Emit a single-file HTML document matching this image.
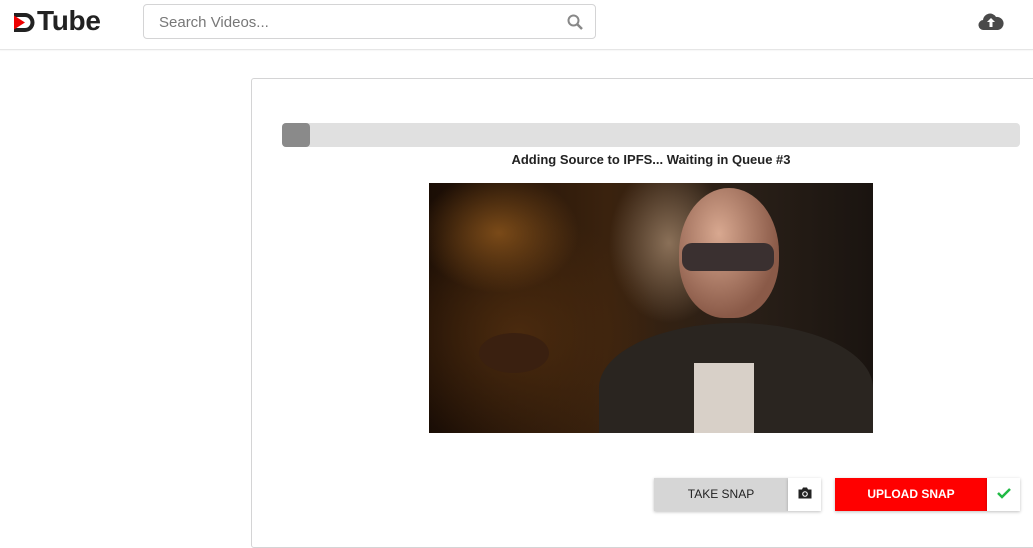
<!DOCTYPE html>
<html><head><meta charset="utf-8"><style>
*{margin:0;padding:0;box-sizing:border-box}
body{width:1033px;height:531px;background:#fff;font-family:"Liberation Sans",Roboto,sans-serif;position:relative;overflow:hidden}
.hdr{position:absolute;left:0;top:0;width:1033px;height:50px;border-bottom:1px solid #e6e6e6;box-shadow:0 1px 1px rgba(0,0,0,.04);background:#fff}
.logo{position:absolute;left:37px;top:5px;font-size:28px;line-height:32px;font-weight:bold;color:#222;letter-spacing:-0.3px}
.search{position:absolute;left:143px;top:4px;width:453px;height:35px;border:1px solid #d4d4d5;border-radius:4px}
.search span{position:absolute;left:15px;top:9px;font-size:15px;color:#777}
.card{position:absolute;left:251px;top:78px;width:790px;height:470px;border:1px solid #d4d4d5;border-radius:3px}
.bar{position:absolute;left:282px;top:123px;width:738px;height:24px;background:#e0e0e0;border-radius:4px}
.bar i{position:absolute;left:0;top:0;width:28px;height:24px;background:#8a8a8a;border-radius:4px}
.msg{position:absolute;left:282px;width:738px;top:152px;text-align:center;font-size:13px;font-weight:bold;color:#222}
.vid{position:absolute;left:429px;top:183px;width:444px;height:250px;overflow:hidden;
background:radial-gradient(ellipse 80px 60px at 70px 50px,#7a4a18,transparent),radial-gradient(ellipse 140px 120px at 90px 150px,#4a2a0e,transparent),radial-gradient(ellipse 60px 80px at 240px 60px,#8a7058,transparent),linear-gradient(90deg,#1a0d05,#3a220e 40%,#2a2018 70%,#1a1410)}
.btn{position:absolute;top:478px;height:33px;box-shadow:0 1px 3px rgba(0,0,0,.25);font-size:12px;text-align:center;line-height:33px}
</style></head><body>
<div class="hdr">
<svg style="position:absolute;left:14px;top:13px" width="21" height="19" viewBox="0 0 21 19"><path d="M0 0h11a9.5 9.5 0 0 1 0 19H0v-4h11a5.5 5.5 0 0 0 0-11H0z" fill="#222"/><path d="M0 2.5l11 7-11 7z" fill="#e00"/></svg>
<div class="logo">Tube</div>
<div class="search"><span>Search Videos...</span>
<svg style="position:absolute;right:12px;top:9px" width="16" height="16" viewBox="0 0 16 16"><circle cx="6.5" cy="6.5" r="5" fill="none" stroke="#888" stroke-width="2"/><path d="M10 10l5 5" stroke="#888" stroke-width="2.5"/></svg></div>
<svg style="position:absolute;left:978px;top:11px" width="26" height="20" viewBox="0 0 26 20"><path d="M6 19a5 5 0 0 1-1-10 7 7 0 0 1 13-3 6 6 0 0 1 2 13z" fill="#4a4a4a"/><path d="M13 7l-4 4h2.5v5h3v-5H17z" fill="#fff"/></svg>
</div>
<div class="card"></div>
<div class="bar"><i></i></div>
<div class="msg">Adding Source to IPFS... Waiting in Queue #3</div>
<div class="vid">
<div style="position:absolute;left:250px;top:5px;width:100px;height:130px;border-radius:50% 50% 45% 45%;background:radial-gradient(ellipse at 40% 35%,#d8a890,#8a5a48 70%)"></div>
<div style="position:absolute;left:253px;top:60px;width:92px;height:28px;border-radius:10px;background:#3a3030"></div>
<div style="position:absolute;left:170px;top:140px;width:274px;height:130px;border-radius:50% 50% 0 0;background:#2a2520"></div>
<div style="position:absolute;left:265px;top:180px;width:60px;height:70px;background:#d8d0c8"></div>
<div style="position:absolute;left:50px;top:150px;width:70px;height:40px;border-radius:50%;background:#3a2010"></div>
</div>
<div class="btn" style="left:654px;width:134px;background:#d6d6d6;color:#222">TAKE SNAP</div>
<div class="btn" style="left:788px;width:33px;background:#fff"><svg width="14" height="12" viewBox="0 0 14 12" style="vertical-align:-1px"><path d="M0.5 2.5h3.5l1-2h4l1 2h3.5v9h-13z" fill="#222"/><circle cx="7" cy="7" r="2.8" fill="#fff"/><circle cx="7" cy="7" r="1.7" fill="#222"/></svg></div>
<div class="btn" style="left:835px;width:152px;background:#f00;color:#fff;font-weight:bold">UPLOAD SNAP</div>
<div class="btn" style="left:987px;width:33px;background:#fff"><svg width="14" height="12" viewBox="0 0 14 12" style="vertical-align:-1px"><path d="M1 6l4 4 8-8" fill="none" stroke="#21ba45" stroke-width="2.5"/></svg></div>
</body></html>
